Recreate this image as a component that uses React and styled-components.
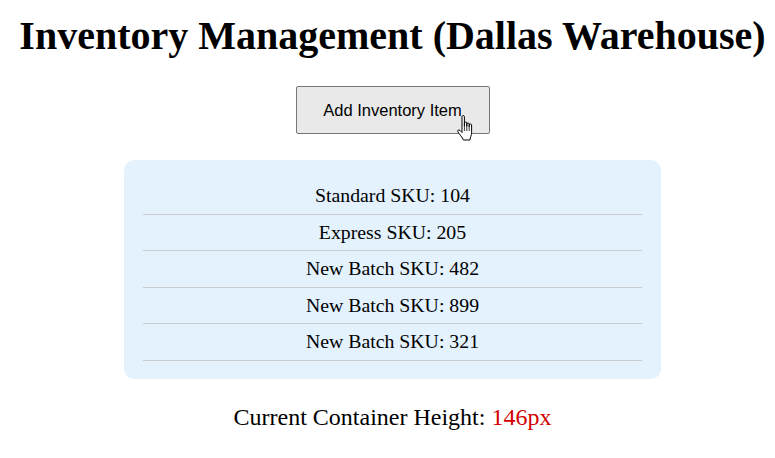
import React from "react";
import styled, { createGlobalStyle } from "styled-components";

const GlobalStyle = createGlobalStyle`
  html, body {
    margin: 0;
    padding: 0;
    background: #ffffff;
  }
  body {
    font-family: "Liberation Serif", "Times New Roman", serif;
    color: #000;
  }
`;

const Page = styled.div`
  display: flex;
  flex-direction: column;
  align-items: center;
  padding-top: 13px;
  padding-left: 10px;
`;

const Title = styled.h1`
  margin: 0;
  font-size: 40px;
  font-weight: bold;
  line-height: 46px;
  white-space: nowrap;
`;

const ButtonWrap = styled.div`
  position: relative;
  margin-top: 27px;
`;

const AddButton = styled.button`
  display: block;
  width: 194px;
  height: 48px;
  font-family: "Liberation Sans", Arial, sans-serif;
  font-size: 16.5px;
  color: #000;
  background: #e9e9e9;
  border: 1px solid #767676;
  border-radius: 2px;
  cursor: pointer;
`;

const Cursor = styled.svg`
  position: absolute;
  left: 160px;
  top: 28px;
  pointer-events: none;
`;

const Panel = styled.ul`
  list-style: none;
  margin: 26px 0 0;
  padding: 18px 19px 18px;
  width: 499px;
  background: #e3f2fd;
  border-radius: 10px;
`;

const Row = styled.li`
  padding: 8px 0;
  font-size: 19.8px;
  line-height: 19.5px;
  text-align: center;
  border-bottom: 1px solid #c9ccd0;
`;

const Footer = styled.p`
  margin: 24px 0 0;
  font-size: 24px;
  line-height: 28px;
`;

const Value = styled.span`
  color: #d10000;
`;

const items = [
  "Standard SKU: 104",
  "Express SKU: 205",
  "New Batch SKU: 482",
  "New Batch SKU: 899",
  "New Batch SKU: 321",
];

export default function App() {
  return (
    <>
      <GlobalStyle />
      <Page>
        <Title>Inventory Management (Dallas Warehouse)</Title>
        <ButtonWrap>
          <AddButton>Add Inventory Item</AddButton>
          <Cursor width="22" height="30" viewBox="0 0 22 30">
            <path
              d="M6 2.5c0-1.2 2.4-1.2 2.4 0V12v-3c0-1.2 2.4-1.2 2.4 0v3.5-2.6c0-1.2 2.4-1.2 2.4 0v3-2c0-1.2 2.4-1.2 2.4 0v7.5c0 3-1.6 5.6-1.6 7.6H7.4c-.6-2-4.6-6.5-5.6-8.3-.7-1.3 1-2.5 2.2-1.3L6 18.5z"
              fill="#fff"
              stroke="#000"
              strokeWidth="1"
              strokeLinejoin="round"
            />
            <path d="M8.4 12v5M10.8 12.5v4.5M13.2 13v4" stroke="#000" strokeWidth="0.8" />
          </Cursor>
        </ButtonWrap>
        <Panel>
          {items.map((item) => (
            <Row key={item}>{item}</Row>
          ))}
        </Panel>
        <Footer>
          Current Container Height: <Value>146px</Value>
        </Footer>
      </Page>
    </>
  );
}
